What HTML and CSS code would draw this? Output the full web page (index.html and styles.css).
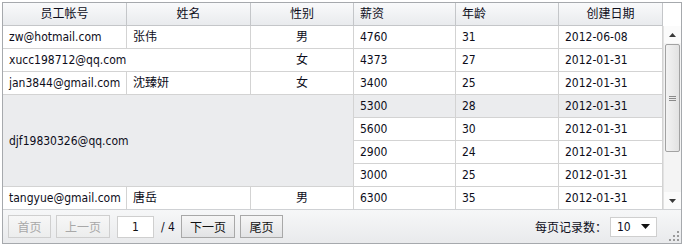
FILE: index.html
```html
<!DOCTYPE html>
<html lang="zh-CN">
<head>
<meta charset="utf-8">
<title>员工列表</title>
<link rel="stylesheet" href="styles.css">
</head>
<body>
<div class="grid">
  <div class="main">
    <div class="left">
      <div class="cols head">
        <div class="hc">员工帐号</div>
        <div class="hc">姓名</div>
        <div class="hc">性别</div>
        <div class="hc lft">薪资</div>
        <div class="hc lft">年龄</div>
        <div class="hc">创建日期</div>
      </div>
      <div class="body">
        <div class="cols rows">
          <div class="c">zw@hotmail.com</div><div class="c">张伟</div><div class="c ctr">男</div><div class="c">4760</div><div class="c">31</div><div class="c">2012-06-08</div>
          <div class="c span2">xucc198712@qq.com</div><div class="c ctr">女</div><div class="c">4373</div><div class="c">27</div><div class="c">2012-01-31</div>
          <div class="c">jan3844@gmail.com</div><div class="c">沈臻妍</div><div class="c ctr">女</div><div class="c">3400</div><div class="c">25</div><div class="c">2012-01-31</div>
          <div class="c big hl">djf19830326@qq.com</div><div class="c hl">5300</div><div class="c hl">28</div><div class="c hl">2012-01-31</div>
          <div class="c">5600</div><div class="c">30</div><div class="c">2012-01-31</div>
          <div class="c">2900</div><div class="c">24</div><div class="c">2012-01-31</div>
          <div class="c">3000</div><div class="c">25</div><div class="c">2012-01-31</div>
          <div class="c">tangyue@gmail.com</div><div class="c">唐岳</div><div class="c ctr">男</div><div class="c">6300</div><div class="c">35</div><div class="c">2012-01-31</div>
        </div>
      </div>
    </div>
    <div class="side">
      <div class="corner"></div>
      <div class="vbar">
        <div class="arrow"><svg width="7" height="4" viewBox="0 0 7 4"><path d="M0 4 L3.5 0 L7 4 Z" fill="#3a3a3a"/></svg></div>
        <div class="track">
          <div class="thumb">
            <svg width="7" height="5" viewBox="0 0 7 5"><path d="M0 0.5 H7 M0 2.5 H7 M0 4.5 H7" stroke="#8a8a8a" stroke-width="1"/></svg>
          </div>
        </div>
        <div class="arrow"><svg width="7" height="4" viewBox="0 0 7 4"><path d="M0 0 L3.5 4 L7 0 Z" fill="#3a3a3a"/></svg></div>
      </div>
    </div>
  </div>
  <div class="footer">
    <div class="pager">
      <button class="btn w2" disabled>首页</button>
      <button class="btn w3 gap" disabled>上一页</button>
      <input class="page" type="text" value="1">
      <span class="total">/ 4</span>
      <button class="btn w3">下一页</button>
      <button class="btn w2">尾页</button>
    </div>
    <div class="size">
      <span class="lbl">每页记录数：</span>
      <div class="select"><span>10</span><svg width="9" height="5" viewBox="0 0 9 5"><path d="M0 0 L9 0 L4.5 5 Z" fill="#111"/></svg></div>
    </div>
    <svg class="grip" width="11" height="11" viewBox="0 0 11 11">
      <g fill="#9a9a9a">
        <rect x="8" y="0" width="2" height="2"/>
        <rect x="4" y="4" width="2" height="2"/><rect x="8" y="4" width="2" height="2"/>
        <rect x="0" y="8" width="2" height="2"/><rect x="4" y="8" width="2" height="2"/><rect x="8" y="8" width="2" height="2"/>
      </g>
    </svg>
  </div>
</div>
</body>
</html>
```

FILE: styles.css
```css
* { box-sizing: border-box; }
body {
  margin: 0;
  background: #fff;
  font-family: "DejaVu Sans Condensed", "DejaVu Sans", "Noto Sans CJK SC", sans-serif;
  font-size: 12px;
  color: #0d0d1a;
}
.grid {
  margin: 2px;
  width: 680px;
  height: 242px;
  border: 1px solid #a6a9ad;
  display: flex;
  flex-direction: column;
  background: #fff;
}
.main { display: flex; height: 206px; }
.left { width: 660px; }
.cols {
  display: grid;
  grid-template-columns: 124px 124px 103px 102px 103px 104px;
}
.head {
  height: 23px;
  background: linear-gradient(#f9fafb, #e8eaed);
}
.hc {
  border-right: 1px solid #c4c6c9;
  border-bottom: 1px solid #c4c6c9;
  text-align: center;
  line-height: 22px;
  height: 23px;
  padding: 0 6px;
}
.hc.lft { text-align: left; }
.body { height: 183px; overflow: hidden; }
.rows { grid-auto-rows: 23px; }
.c {
  border-right: 1px solid #d3d3d3;
  border-bottom: 1px solid #d3d3d3;
  padding: 0 6px;
  line-height: 22px;
  white-space: nowrap;
  overflow: hidden;
}
.ctr { text-align: center; }
.span2 { grid-column: span 2; }
.big {
  grid-column: span 3;
  grid-row: span 4;
  display: flex;
  align-items: center;
}
.hl { background: #ebecee; }
.side { width: 18px; display: flex; flex-direction: column; }
.corner { height: 23px; background: #fff; }
.vbar {
  flex: 1;
  display: flex;
  flex-direction: column;
  background: #f4f4f4;
  border-left: 1px solid #e2e2e2;
}
.arrow {
  height: 17px;
  display: flex;
  align-items: center;
  justify-content: center;
  background: #fbfbfb;
}
.track { flex: 1; padding: 1px 1px; }
.thumb {
  height: 108px;
  border: 1px solid #a2a2a2;
  border-radius: 2px;
  background: linear-gradient(90deg, #f3f3f3, #e2e2e2);
  display: flex;
  align-items: center;
  justify-content: center;
}
.footer {
  flex: 1;
  border-top: 1px solid #cfd1d4;
  background: linear-gradient(#f6f7f8, #e9eaec);
  display: flex;
  align-items: center;
  padding: 0 24px 0 5px;
  position: relative;
}
.pager { display: flex; align-items: center; }
.btn {
  font: inherit;
  color: #111;
  height: 23px;
  padding: 0;
  margin-right: 5px;
  border: 1px solid #a8a8a8;
  background: linear-gradient(#f6f6f6, #e2e3e5);
  border-radius: 0;
}
.btn:disabled {
  color: #a8a8a8;
  border-color: #cfcfcf;
  background: linear-gradient(#f7f7f7, #eceded);
}
.btn.gap { margin-right: 7px; }
.w2 { width: 43px; }
.w3 { width: 54px; }
.page {
  font: inherit;
  width: 37px;
  height: 22px;
  border: 1px solid #cfcfcf;
  background: #fff;
  text-align: center;
  padding: 0;
  color: #111;
}
.total { margin: 0 6px 0 7px; }
.size { margin-left: auto; display: flex; align-items: center; }
.lbl { margin-right: 3px; }
.select {
  width: 47px;
  height: 20px;
  border: 1px solid #cfcfcf;
  background: #fff;
  display: flex;
  align-items: center;
  justify-content: space-between;
  padding: 0 6px 0 6px;
}
.grip { position: absolute; right: 1px; bottom: 1px; }
```
